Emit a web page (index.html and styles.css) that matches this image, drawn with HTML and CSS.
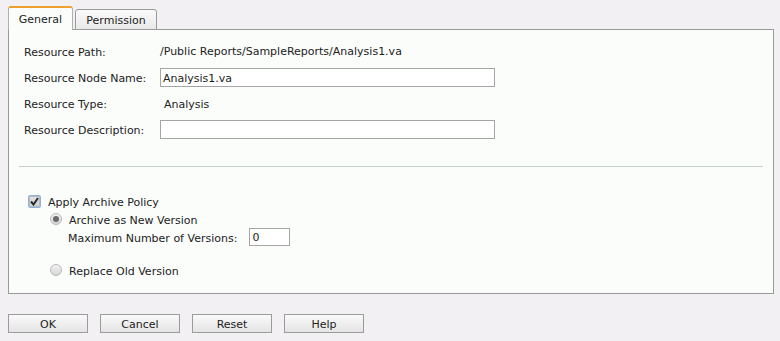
FILE: index.html
```html
<!DOCTYPE html>
<html>
<head>
<meta charset="utf-8">
<link rel="stylesheet" href="styles.css">
</head>
<body>
<div class="page">
  <div class="tabs">
    <div class="tab tab-active">General</div>
    <div class="tab">Permission</div>
  </div>
  <div class="panel">
    <div class="form">
      <div class="label">Resource Path:</div>
      <div class="value">/Public Reports/SampleReports/Analysis1.va</div>
      <div class="label">Resource Node Name:</div>
      <div class="value"><div class="input wide">Analysis1.va</div></div>
      <div class="label">Resource Type:</div>
      <div class="value indent">Analysis</div>
      <div class="label">Resource Description:</div>
      <div class="value"><div class="input wide"></div></div>
    </div>
    <div class="rule"></div>
    <div class="policy">
      <div class="row check-row">
        <span class="checkbox"><svg width="9" height="9" viewBox="0 0 9 9"><path d="M1 4.5 L3.5 7.5 L8 1" fill="none" stroke="#2a2a2a" stroke-width="2"/></svg></span>
        <span class="txt">Apply Archive Policy</span>
      </div>
      <div class="row radio-row">
        <span class="radio checked"></span>
        <span class="txt">Archive as New Version</span>
      </div>
      <div class="row max-row">
        <span class="txt">Maximum Number of Versions:</span>
        <div class="input small">0</div>
      </div>
      <div class="row radio-row last">
        <span class="radio"></span>
        <span class="txt">Replace Old Version</span>
      </div>
    </div>
  </div>
  <div class="buttons">
    <div class="btn">OK</div>
    <div class="btn">Cancel</div>
    <div class="btn">Reset</div>
    <div class="btn">Help</div>
  </div>
</div>
</body>
</html>
```
FILE: styles.css
```css
html, body {
  margin: 0;
  padding: 0;
  background: #f2f0f3;
}
body {
  font-family: "DejaVu Sans", Verdana, sans-serif;
  font-size: 11px;
  color: #222;
}
.page {
  padding: 6px 7px 0 8px;
}
.tabs {
  display: flex;
  align-items: flex-end;
  gap: 2px;
  height: 24px;
  margin-bottom: -1px;
  position: relative;
  z-index: 1;
}
.tab {
  box-sizing: border-box;
  height: 21px;
  width: 82px;
  border: 1px solid #9a9a9a;
  border-radius: 3px 3px 0 0;
  background: linear-gradient(#fafafa, #e9e9e9);
  display: flex;
  align-items: center;
  justify-content: center;
  padding-top: 2px;
}
.tab-active {
  width: 65px;
  height: 24px;
  border-top: 2px solid #f0a030;
  border-bottom: none;
  border-color: #f0a030 #b0b0b0 transparent #b0b0b0;
  background: #fbfdfb;
  padding-top: 1px;
}
.panel {
  box-sizing: border-box;
  width: 766px;
  height: 265px;
  border: 1px solid #999;
  background: #fbfdfb;
  padding-top: 8px;
}
.form {
  display: grid;
  grid-template-columns: 136px 340px;
  grid-auto-rows: 26px;
  padding-left: 15px;
}
.label, .value {
  display: flex;
  align-items: center;
}
.label {
  padding-top: 2px;
}
.value {
  padding-top: 1px;
}
.value.indent {
  padding-left: 4px;
  padding-top: 2px;
}
.input {
  box-sizing: border-box;
  height: 19px;
  border: 1px solid #a5a5a5;
  background: #fff;
  padding-left: 2px;
  padding-top: 1px;
  display: flex;
  align-items: center;
}
.input.wide {
  width: 335px;
}
.input.small {
  width: 41px;
  height: 18px;
  margin-left: 12px;
}
.rule {
  height: 1px;
  background: #c7d0d0;
  margin: 24px 10px 0 10px;
}
.policy {
  padding-top: 25px;
}
.row {
  display: flex;
  align-items: center;
  height: 18px;
}
.txt {
  padding-top: 2px;
}
.check-row {
  padding-left: 19px;
}
.radio-row {
  padding-left: 41px;
}
.max-row {
  padding-left: 59px;
}
.radio-row.last {
  margin-top: 15px;
}
.checkbox {
  box-sizing: border-box;
  width: 13px;
  height: 13px;
  border: 1px solid #8cb1e6;
  border-radius: 2px;
  background: linear-gradient(#e4e4e4, #cfcfcf);
  box-shadow: inset 0 0 0 1px #b9b9b9;
  display: flex;
  align-items: center;
  justify-content: center;
  margin-right: 7px;
}
.radio {
  box-sizing: border-box;
  width: 12px;
  height: 12px;
  border-radius: 50%;
  border: 1px solid #b8b8b8;
  background: linear-gradient(#f2f2f2, #d6d6d6);
  margin-right: 7px;
  display: flex;
  align-items: center;
  justify-content: center;
}
.radio.checked::after {
  content: "";
  width: 6px;
  height: 6px;
  border-radius: 50%;
  background: #6a6a6a;
}
.buttons {
  display: flex;
  gap: 12px;
  margin-top: 20px;
}
.btn {
  box-sizing: border-box;
  width: 80px;
  height: 19px;
  border: 1px solid #9c9c9c;
  background: linear-gradient(#fafafa, #e4e4e4);
  display: flex;
  align-items: center;
  justify-content: center;
  padding-top: 1px;
}
```
